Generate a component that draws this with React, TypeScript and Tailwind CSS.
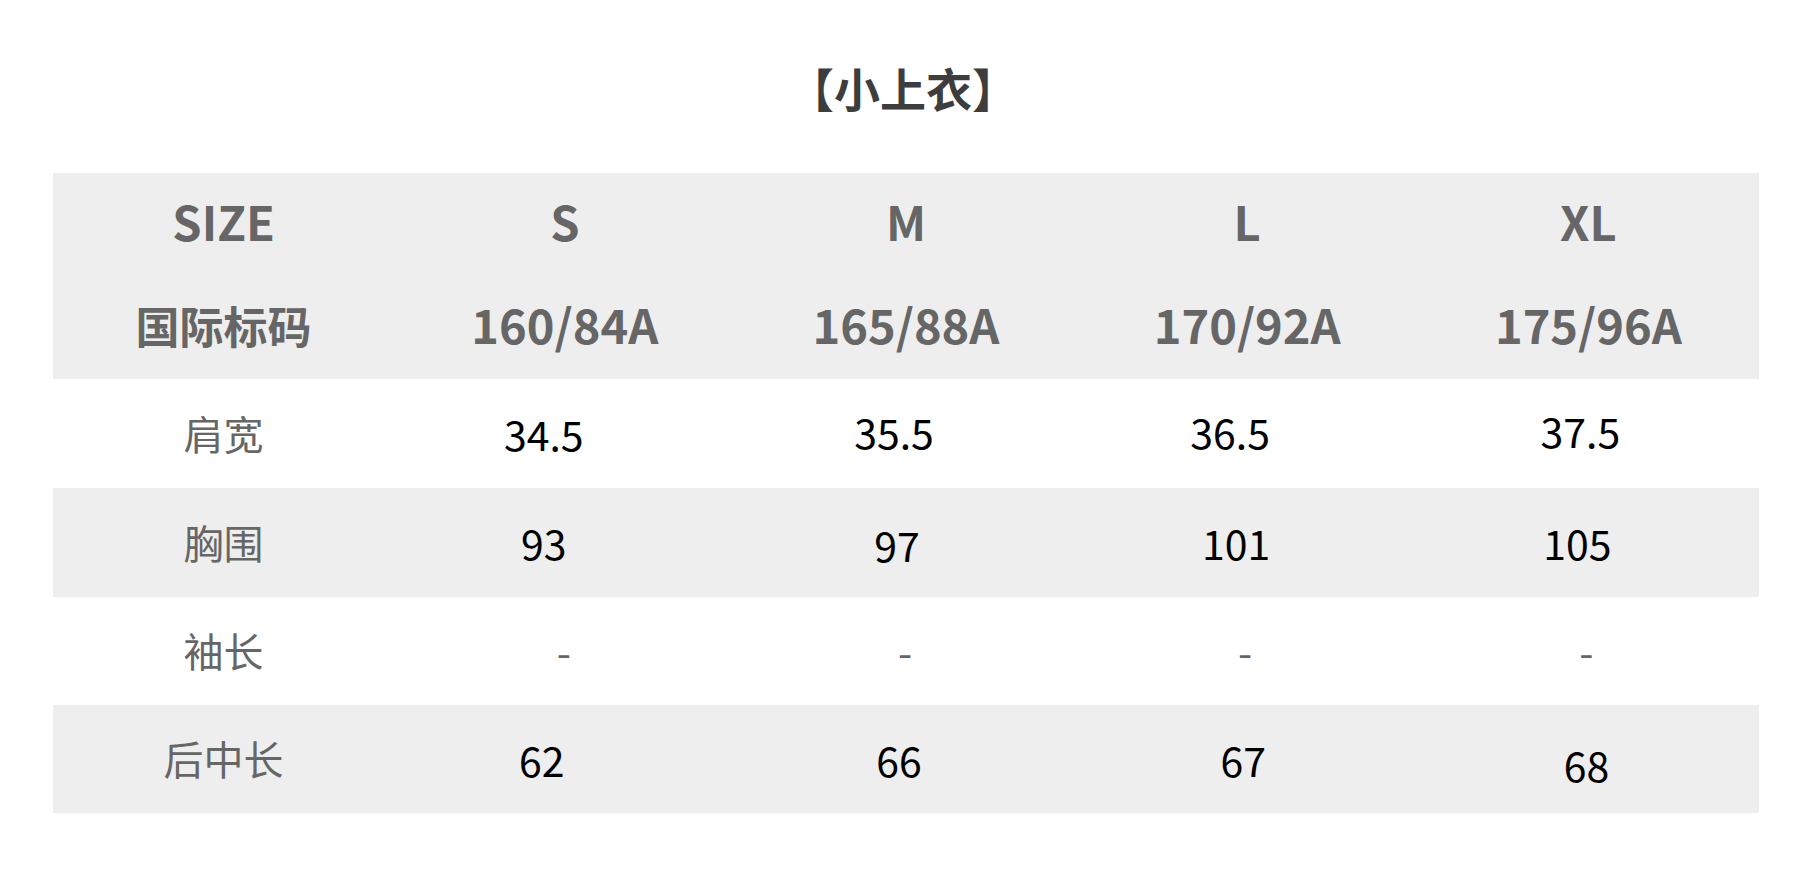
import React from "react";

type Cell = { text: string; nudge?: string };

const FONT = "font-['Noto_Sans_CJK_SC','Noto_Sans',sans-serif]";

const sizes = ["S", "M", "L", "XL"];
const codes = ["160/84A", "165/88A", "170/92A", "175/96A"];

const rows: { label: string; gray: boolean; h: string; cells: Cell[] }[] = [
  {
    label: "肩宽",
    gray: false,
    h: "h-[109px]",
    cells: [
      { text: "34.5", nudge: "-translate-x-[21px]" },
      { text: "35.5", nudge: "-translate-x-[12px] -translate-y-[2px]" },
      { text: "36.5", nudge: "-translate-x-[17px] -translate-y-[2px]" },
      { text: "37.5", nudge: "-translate-x-[8px] -translate-y-[3px]" },
    ],
  },
  {
    label: "胸围",
    gray: true,
    h: "h-[109px]",
    cells: [
      { text: "93", nudge: "-translate-x-[21px]" },
      { text: "97", nudge: "-translate-x-[9px] translate-y-[2px]" },
      { text: "101", nudge: "-translate-x-[11px]" },
      { text: "105", nudge: "-translate-x-[11px]" },
    ],
  },
  {
    label: "袖长",
    gray: false,
    h: "h-[108px]",
    cells: [
      { text: "-", nudge: "-translate-x-[1px] -translate-y-[1px]" },
      { text: "-", nudge: "-translate-x-[1px] -translate-y-[1px]" },
      { text: "-", nudge: "-translate-x-[2px] -translate-y-[1px]" },
      { text: "-", nudge: "-translate-x-[2px] -translate-y-[1px]" },
    ],
  },
  {
    label: "后中长",
    gray: true,
    h: "h-[108px]",
    cells: [
      { text: "62", nudge: "-translate-x-[23px]" },
      { text: "66", nudge: "-translate-x-[7px]" },
      { text: "67", nudge: "-translate-x-[4px]" },
      { text: "68", nudge: "-translate-x-[2px] translate-y-[5px]" },
    ],
  },
];

function SizeTable() {
  return (
    <div className="ml-[53px] w-[1706px]">
      {/* header block */}
      <div className="bg-[#eeeeee] text-[#666666] font-bold">
        <div className="grid h-[103px] grid-cols-5 items-center text-[47px] leading-none">
          <span className="-translate-y-[4px] text-center">SIZE</span>
          {sizes.map((s) => (
            <span key={s} className="-translate-y-[4px] text-center">
              {s}
            </span>
          ))}
        </div>
        <div className="grid h-[103px] grid-cols-5 items-center leading-none">
          <span className="-translate-y-[3px] text-center text-[44px]">国际标码</span>
          {codes.map((c) => (
            <span key={c} className="-translate-y-[4px] text-center text-[47px]">
              {c}
            </span>
          ))}
        </div>
      </div>

      {rows.map((r) => (
        <div
          key={r.label}
          className={`grid grid-cols-5 items-center leading-none ${r.h} ${
            r.gray ? "bg-[#eeeeee]" : "bg-white"
          }`}
        >
          <span className="-translate-y-[1px] text-center text-[40px] text-[#666666]">
            {r.label}
          </span>
          {r.cells.map((c, i) => (
            <div key={i} className="flex justify-center">
              <span
                className={`text-[41px] ${
                  c.text === "-" ? "text-[#666666]" : "text-black"
                } ${c.nudge ?? ""}`}
              >
                {c.text}
              </span>
            </div>
          ))}
        </div>
      ))}
    </div>
  );
}

export default function App() {
  return (
    <div className={`flex h-[891px] w-[1806px] flex-col bg-white ${FONT}`}>
      <div className="flex h-[173px] items-center justify-center">
        <h1 className="text-[46px] font-bold leading-none text-[#3d3d3d]">【小上衣】</h1>
      </div>
      <SizeTable />
    </div>
  );
}
